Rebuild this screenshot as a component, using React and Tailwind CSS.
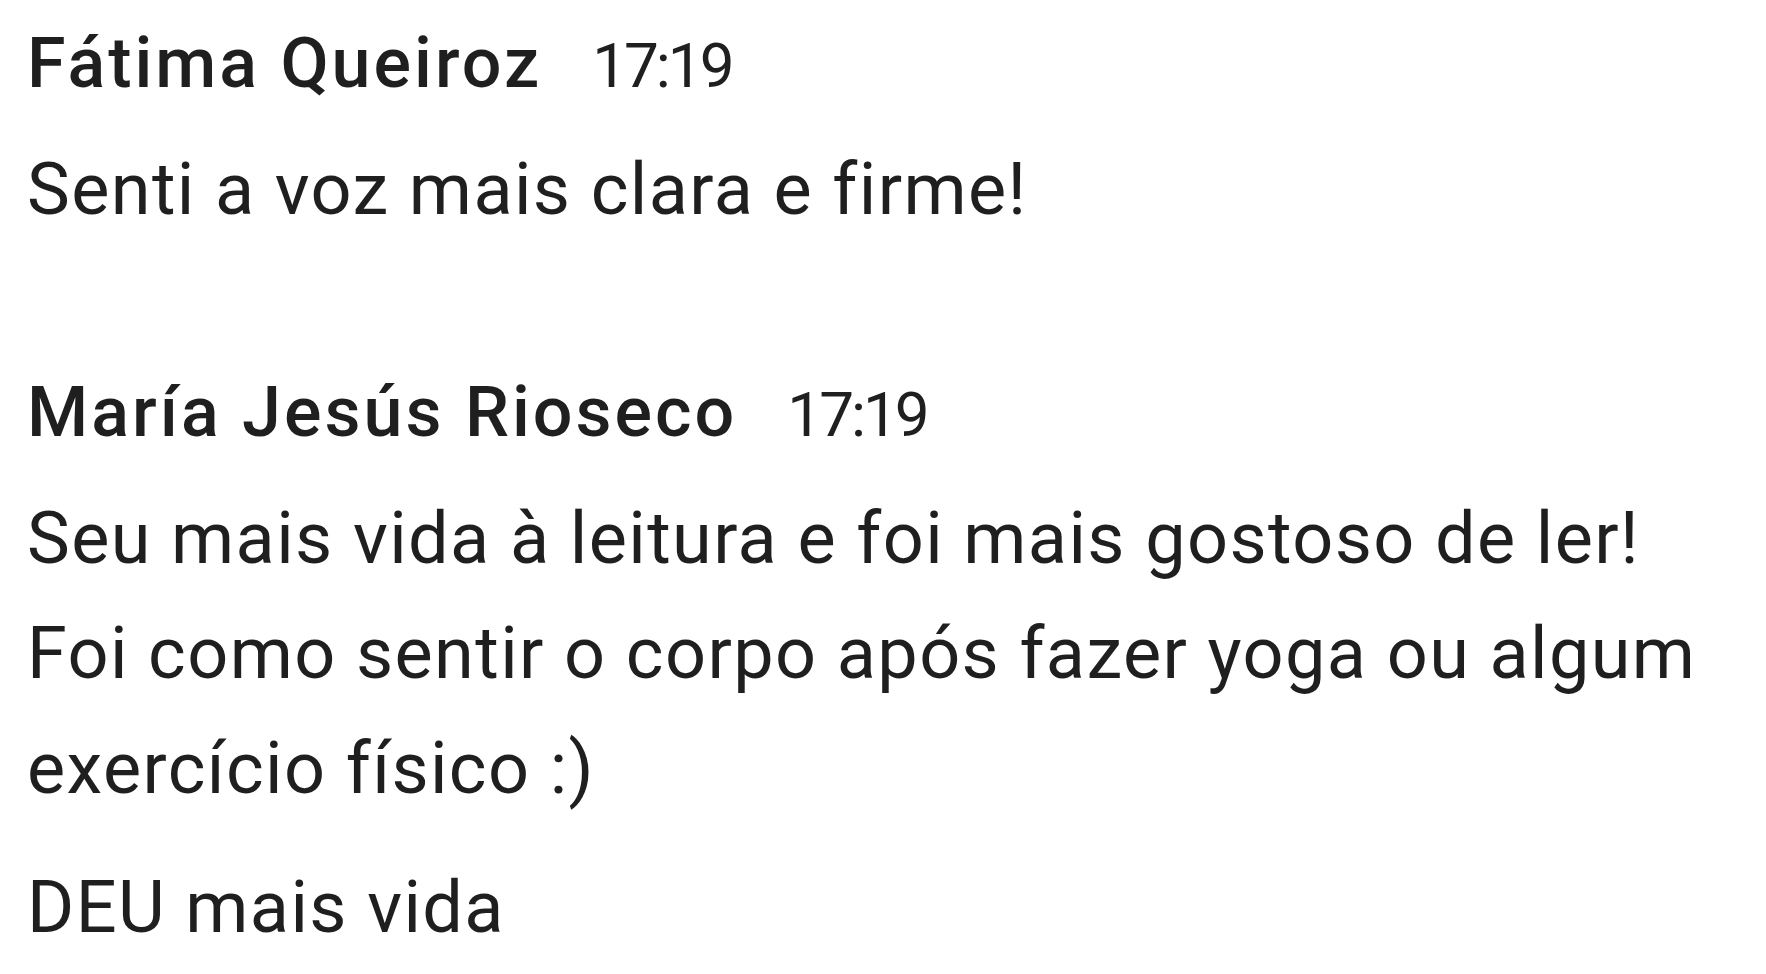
export default function App() {
  const font = { fontFamily: "Roboto, 'Noto Sans', sans-serif" };
  return (
    <div className="w-full h-[974px] bg-white text-[#1f1f1f] pl-[27px] pt-[23px] overflow-hidden" style={font}>
      <div className="flex flex-col">
        <div className="flex items-baseline gap-[50px] h-[80px]">
          <span className="text-[70px] leading-[80px] font-medium tracking-[3px]">Fátima Queiroz</span>
          <span className="text-[62px] leading-[80px] tracking-[-3px]">17:19</span>
        </div>
        <div className="mt-[29px] text-[72px] leading-[115px] tracking-[1.4px]">
          <p>Senti a voz mais clara e firme!</p>
        </div>
      </div>
      <div className="flex flex-col mt-[125px]">
        <div className="flex items-baseline gap-[50px] h-[80px]">
          <span className="text-[70px] leading-[80px] font-medium tracking-[3px]">María Jesús Rioseco</span>
          <span className="text-[62px] leading-[80px] tracking-[-3px]">17:19</span>
        </div>
        <div className="mt-[29px] text-[72px] leading-[115px] tracking-[1.4px]">
          <p>Seu mais vida à leitura e foi mais gostoso de ler!</p>
          <p>Foi como sentir o corpo após fazer yoga ou algum</p>
          <p>exercício físico :)</p>
          <p className="mt-[24px]">DEU mais vida</p>
        </div>
      </div>
    </div>
  );
}
